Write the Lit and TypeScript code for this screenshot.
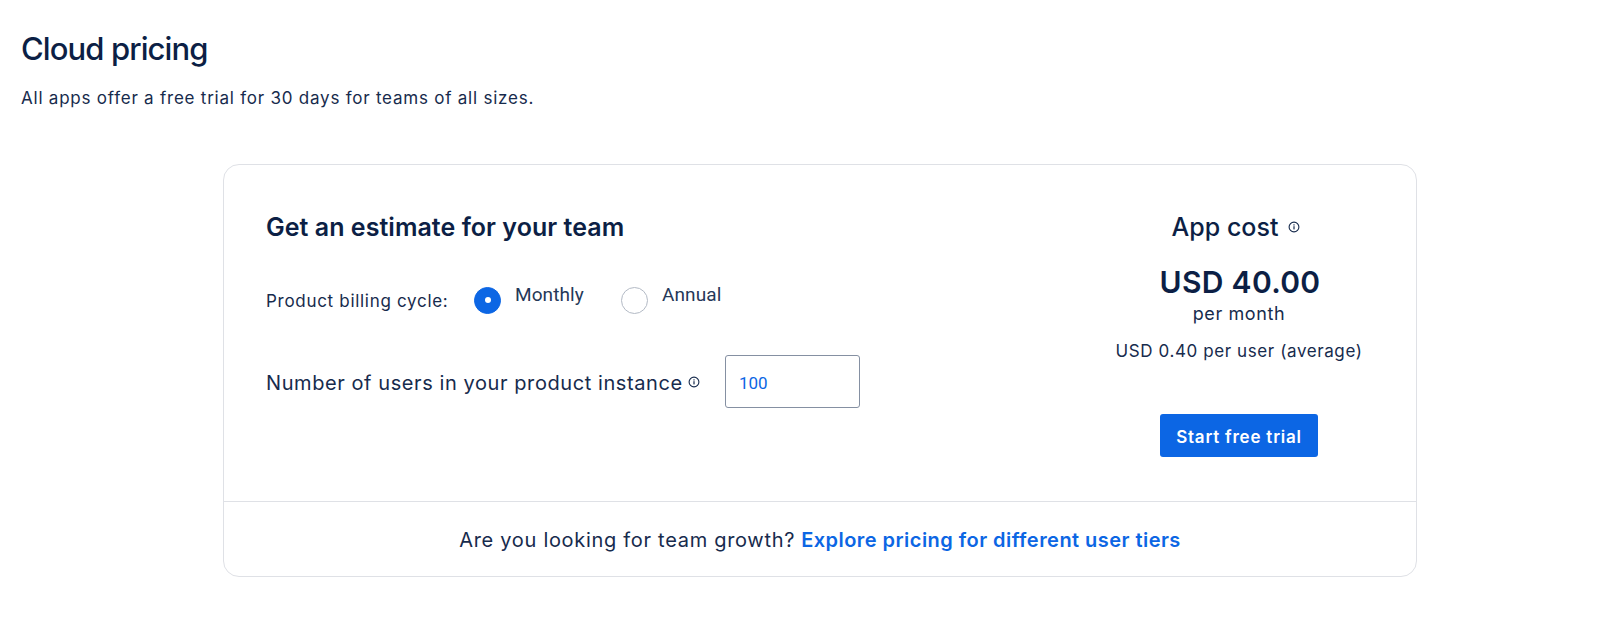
import { LitElement, html, css, svg } from "lit";
import { customElement } from "lit/decorators.js";

const info = svg`<svg class="info" viewBox="0 0 12 12" width="12" height="12" aria-hidden="true">
  <circle cx="6" cy="6" r="4.9" fill="none" stroke="currentColor" stroke-width="1.1"/>
  <rect x="5.4" y="5.2" width="1.2" height="3.2" fill="currentColor"/>
  <rect x="5.4" y="3.3" width="1.2" height="1.2" fill="currentColor"/>
</svg>`;

@customElement("app-root")
export class AppRoot extends LitElement {
  static styles = css`
    :host {
      display: block;
      height: 621px;
      background: #fff;
      color: #172b4d;
      font-family: "Inter", "Noto Sans", sans-serif;
      overflow: hidden;
    }
    .page { padding: 29px 0 0 21px; }
    h1 {
      margin: 0;
      font-size: 31px;
      line-height: 40px;
      font-weight: 500;
      letter-spacing: -0.9px;
      color: #0c1f45;
    }
    .sub {
      margin: 17px 0 0;
      font-size: 17px;
      line-height: 24px;
      letter-spacing: 0.77px;
    }
    .card {
      box-sizing: border-box;
      width: 1194px;
      height: 413px;
      margin: 54px 0 0 202px;
      border: 1px solid #dfe1e6;
      border-radius: 16px;
      display: flex;
      flex-direction: column;
    }
    .main {
      box-sizing: border-box;
      height: 337px;
      flex: none;
      padding: 44px 54px 0 42px;
      display: flex;
      justify-content: space-between;
      border-bottom: 1px solid #dfe1e6;
    }
    h2 {
      margin: 0;
      font-size: 25px;
      line-height: 36px;
      font-weight: 600;
      letter-spacing: 0.04px;
      color: #0c1f45;
    }
    .billing {
      margin-top: 41px;
      display: flex;
      align-items: center;
      height: 28px;
    }
    .billing .lbl {
      font-size: 17px;
      letter-spacing: 0.7px;
      margin-top: 2px;
      width: 208px;
    }
    .radio {
      box-sizing: border-box;
      width: 27px;
      height: 27px;
      border-radius: 50%;
      border: 1px solid #b3bac5;
      display: flex;
      align-items: center;
      justify-content: center;
      flex: none;
    }
    .radio.on { background: #0c66e4; border-color: #0c66e4; }
    .radio.on::after {
      content: "";
      width: 6px;
      height: 6px;
      border-radius: 50%;
      background: #fff;
    }
    .opt {
      font-family: "Roboto", sans-serif;
      font-size: 19px;
      line-height: 24px;
      letter-spacing: 0.1px;
      margin: -10px 0 0 14px;
      color: #253858;
    }
    .opt.m { width: 106px; }
    .users {
      margin-top: 41px;
      display: flex;
      align-items: center;
      height: 53px;
    }
    .users .lbl {
      font-size: 20px;
      letter-spacing: 0.58px;
      padding-top: 2px;
      width: 422px;
    }
    .info { flex: none; color: #172b4d; }
    .input {
      box-sizing: border-box;
      margin-left: 25px;
      width: 135px;
      height: 53px;
      border: 1px solid #8590a2;
      border-radius: 3px;
      padding: 3px 0 0 13px;
      display: flex;
      align-items: center;
      font-family: "Roboto", sans-serif;
      font-size: 17px;
      color: #0c66e4;
    }
    .right {
      width: 246px;
      display: flex;
      flex-direction: column;
      align-items: center;
      text-align: center;
    }
    .cost { display: flex; align-items: center; gap: 10px; margin-right: 6px; }
    .cost h2 { font-weight: 500; letter-spacing: 0; }
    .price {
      margin-top: 19px;
      font-size: 30px;
      line-height: 36px;
      font-weight: 600;
      letter-spacing: 0.3px;
      margin-left: 2px;
      color: #0c1f45;
    }
    .per {
      margin-top: 2px;
      font-size: 18px;
      line-height: 24px;
      letter-spacing: 0.6px;
    }
    .avg {
      margin-top: 13px;
      font-size: 17px;
      line-height: 24px;
      letter-spacing: 0.6px;
      white-space: nowrap;
    }
    .btn {
      box-sizing: border-box;
      margin-top: 51px;
      width: 158px;
      height: 43px;
      border: 0;
      border-radius: 3px;
      background: #0c66e4;
      color: #fff;
      font: 600 17px/40px "Inter", sans-serif;
      letter-spacing: 0.78px;
      padding: 3px 0 0;
    }
    .foot {
      flex: 1;
      display: flex;
      align-items: center;
      justify-content: center;
      font-size: 20px;
      padding-top: 2px;
      gap: 6px;
    }
    .foot span { letter-spacing: 0.7px; }
    .foot a {
      color: #0c66e4;
      font-weight: 600;
      letter-spacing: 0.46px;
      text-decoration: none;
    }
  `;

  render() {
    return html`
      <div class="page">
        <h1>Cloud pricing</h1>
        <p class="sub">All apps offer a free trial for 30 days for teams of all sizes.</p>
        <section class="card">
          <div class="main">
            <div class="left">
              <h2>Get an estimate for your team</h2>
              <div class="billing">
                <span class="lbl">Product billing cycle:</span>
                <span class="radio on"></span><span class="opt m">Monthly</span>
                <span class="radio"></span><span class="opt">Annual</span>
              </div>
              <div class="users">
                <span class="lbl">Number of users in your product instance</span>
                ${info}
                <div class="input">100</div>
              </div>
            </div>
            <div class="right">
              <div class="cost"><h2>App cost</h2>${info}</div>
              <div class="price">USD 40.00</div>
              <div class="per">per month</div>
              <div class="avg">USD 0.40 per user (average)</div>
              <button class="btn">Start free trial</button>
            </div>
          </div>
          <div class="foot">
            <span>Are you looking for team growth?</span>
            <a href="#">Explore pricing for different user tiers</a>
          </div>
        </section>
      </div>
    `;
  }
}
